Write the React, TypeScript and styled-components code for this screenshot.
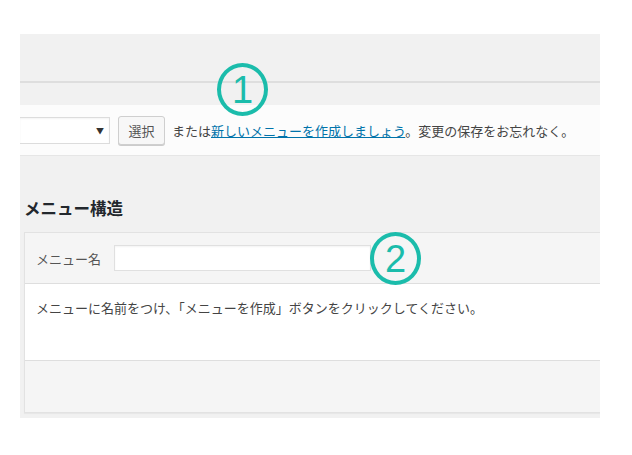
import React from 'react';
import styled, { createGlobalStyle } from 'styled-components';

const GlobalStyle = createGlobalStyle`
  html, body {
    margin: 0;
    padding: 0;
    background: #fff;
  }
  body {
    font-family: "Noto Sans CJK JP", "Noto Sans", sans-serif;
    color: #444;
  }
`;

const Page = styled.div`
  position: relative;
  width: 632px;
  height: 455px;
  padding-top: 34px;
  box-sizing: border-box;
`;

const Screen = styled.div`
  margin-left: 20px;
  width: 580px;
  height: 384px;
  background: #f1f1f1;
  overflow: hidden;
  display: flex;
  flex-direction: column;
`;

const TopArea = styled.div`
  height: 47px;
  border-bottom: 2px solid #dedede;
  flex-shrink: 0;
`;

const ManageBar = styled.div`
  margin-top: 22px;
  height: 50px;
  background: #fcfcfc;
  border-bottom: 1px solid #e6e6e6;
  display: flex;
  align-items: center;
  flex-shrink: 0;
`;

const Select = styled.div`
  width: 90px;
  height: 27px;
  box-sizing: border-box;
  background: #fff;
  border: 1px solid #dcdcdc;
  border-left: none;
  box-shadow: inset 0 1px 2px rgba(0, 0, 0, 0.05);
  display: flex;
  align-items: center;
  justify-content: flex-end;
  padding-right: 5px;
  font-size: 8px;
  color: #333;
`;

const Button = styled.div`
  margin-left: 8px;
  width: 47px;
  height: 29px;
  box-sizing: border-box;
  border: 1px solid #cfcfcf;
  border-radius: 3px;
  background: #f7f7f7;
  box-shadow: 0 1px 0 #ccc;
  display: flex;
  align-items: center;
  justify-content: center;
  font-size: 13px;
  color: #555;
`;

const BarText = styled.span`
  margin-left: 7px;
  font-size: 13px;
  color: #444;
  white-space: nowrap;
`;

const Link = styled.a`
  color: #0073aa;
  text-decoration: underline;
`;

const Heading = styled.h3`
  margin: 40px 0 0 4px;
  font-size: 16.5px;
  font-weight: 700;
  color: #23282d;
  line-height: 24px;
`;

const Card = styled.div`
  margin: 12px 0 0 4px;
  height: 181px;
  box-sizing: border-box;
  border: 1px solid #e2e2e2;
  border-right: none;
  box-shadow: 0 1px 1px rgba(0, 0, 0, 0.04);
  display: flex;
  flex-direction: column;
  flex-shrink: 0;
`;

const CardHeader = styled.div`
  height: 50px;
  background: #f5f5f5;
  border-bottom: 1px solid #dedede;
  display: flex;
  align-items: center;
  padding-left: 11px;
  gap: 13px;
`;

const Label = styled.span`
  font-size: 13px;
  color: #555;
`;

const NameInput = styled.div`
  width: 257px;
  height: 26px;
  box-sizing: border-box;
  background: #fff;
  border: 1px solid #e0e0e0;
  box-shadow: inset 0 1px 2px rgba(0, 0, 0, 0.05);
`;

const CardBody = styled.div`
  height: 76px;
  background: #fff;
  padding: 14px 0 0 11px;
  box-sizing: border-box;
  font-size: 13px;
  color: #444;
`;

const CardFooter = styled.div`
  flex: 1;
  background: #f5f5f5;
  border-top: 1px solid #dedede;
`;

const Marker = styled.div<{ $x: number; $y: number }>`
  position: absolute;
  left: ${(p) => p.$x}px;
  top: ${(p) => p.$y}px;
  width: 43px;
  height: 45px;
  border: 4px solid #1bbcab;
  border-radius: 50%;
  display: flex;
  align-items: center;
  justify-content: center;
  font-family: "Liberation Sans", sans-serif;
  font-size: 38px;
  line-height: 1;
  color: #1bbcab;
`;

export default function App() {
  return (
    <>
      <GlobalStyle />
      <Page>
        <Screen>
          <TopArea />
          <ManageBar>
            <Select>▼</Select>
            <Button>選択</Button>
            <BarText>
              または<Link>新しいメニューを作成しましょう</Link>。変更の保存をお忘れなく。
            </BarText>
          </ManageBar>
          <Heading>メニュー構造</Heading>
          <Card>
            <CardHeader>
              <Label>メニュー名</Label>
              <NameInput />
            </CardHeader>
            <CardBody>メニューに名前をつけ、「メニューを作成」ボタンをクリックしてください。</CardBody>
            <CardFooter />
          </Card>
        </Screen>
        <Marker $x={217} $y={63}>1</Marker>
        <Marker $x={370} $y={232}>2</Marker>
      </Page>
    </>
  );
}
